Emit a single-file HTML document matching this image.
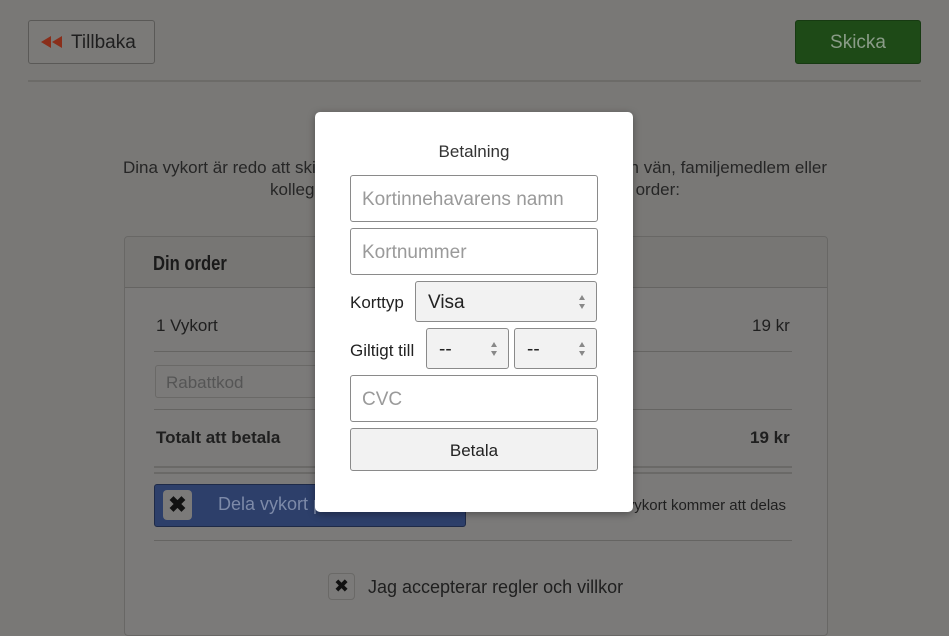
<!DOCTYPE html>
<html><head><meta charset="utf-8"><style>
*{box-sizing:border-box;margin:0;padding:0}
body{width:949px;height:626px;overflow:hidden;background:#797876;font-family:"Liberation Sans",sans-serif;position:relative;color:#1f1f1f}
.a{position:absolute}
.btn{border:1px solid #5a5957;border-radius:3px}
.inp{position:absolute;left:35px;width:248px;border:1px solid #8a8a8a;border-radius:3px;background:#fff;color:#9a9a9a;font-size:19px;padding-left:11px;padding-top:2px;display:flex;align-items:center}
.sel{position:absolute;border:1px solid #8a8a8a;border-radius:3px;background:#f2f2f2;font-size:19px;color:#222;display:flex;align-items:center;padding-left:12px;padding-top:2px}
.arr{position:absolute;right:10px;top:50%;margin-top:-7px;width:7px;height:14px}
.arr:before{content:"";position:absolute;left:0;top:0;border-left:3.5px solid transparent;border-right:3.5px solid transparent;border-bottom:5px solid #888}
.arr:after{content:"";position:absolute;left:0;bottom:0;border-left:3.5px solid transparent;border-right:3.5px solid transparent;border-top:5px solid #888}
</style></head><body>
<div class="a btn" style="left:28px;top:20px;width:127px;height:44px;background:#7b7a78;font-size:19px;line-height:44px;padding-left:42px">Tillbaka</div>
<svg class="a" style="left:41px;top:36px" width="24" height="14"><path d="M0 6L10 0V12Z M11 6L21 0V12Z" fill="#8a2e1a"/></svg>
<div class="a btn" style="left:795px;top:20px;width:126px;height:44px;background:#1e4a17;border-color:#173a12;color:#8a9c88;font-size:19px;line-height:44px;text-align:center">Skicka</div>
<div class="a" style="left:28px;top:80px;width:893px;height:2px;background:#6c6b68"></div>
<div class="a" style="left:123px;top:158px;font-size:17px;color:#262626;white-space:nowrap">Dina vykort är redo att skickas! Dela dem</div>
<div class="a" style="right:122px;top:158px;font-size:17px;color:#262626;white-space:nowrap">en vän, familjemedlem eller</div>
<div class="a" style="left:270px;top:180px;font-size:17px;color:#262626;white-space:nowrap">kollega genom att</div>
<div class="a" style="right:269px;top:180px;font-size:17px;color:#262626;white-space:nowrap">din order:</div>
<div class="a" style="left:124px;top:236px;width:704px;height:400px;border:1px solid #686765;border-radius:4px;background:#7b7a79"></div>
<div class="a" style="left:125px;top:237px;width:702px;height:51px;background:#777674;border-bottom:1px solid #656462;border-radius:4px 4px 0 0"></div>
<div class="a" style="left:153px;top:253px;font-size:20px;font-weight:bold;color:#1a1a1a;transform:scaleX(.83);transform-origin:0 0">Din order</div>
<div class="a" style="left:156px;top:316px;font-size:17px">1 Vykort</div>
<div class="a" style="left:752px;top:316px;font-size:17px">19 kr</div>
<div class="a" style="left:154px;top:351px;width:638px;height:1px;background:#656462"></div>
<div class="a" style="left:155px;top:365px;width:190px;height:33px;border:1px solid #6a6967;border-radius:3px;font-size:17px;color:#555;line-height:33px;padding-left:10px">Rabattkod</div>
<div class="a" style="left:154px;top:409px;width:638px;height:1px;background:#656462"></div>
<div class="a" style="left:156px;top:428px;font-size:17px;font-weight:bold">Totalt att betala</div>
<div class="a" style="left:750px;top:428px;font-size:17px;font-weight:bold">19 kr</div>
<div class="a" style="left:154px;top:466px;width:638px;height:2px;background:#6a6967"></div>
<div class="a" style="left:154px;top:472px;width:638px;height:2px;background:#6a6967"></div>
<div class="a" style="left:154px;top:484px;width:312px;height:43px;background:#2d3f6a;border:1px solid #1e2a48;border-radius:3px"></div>
<div class="a" style="left:163px;top:490px;width:29px;height:30px;background:#7b7a79;border-radius:4px;font-size:22px;line-height:30px;text-align:center;color:#111;font-weight:bold">✖</div>
<div class="a" style="left:218px;top:494px;font-size:18px;color:#7d8aa8">Dela vykort på Facebook</div>
<div class="a" style="right:163px;top:497px;font-size:15px;color:#1f1f1f;white-space:nowrap">Alla vykort kommer att delas</div>
<div class="a" style="left:154px;top:540px;width:638px;height:1px;background:#656462"></div>
<div class="a" style="left:328px;top:573px;width:27px;height:27px;border:1px solid #6a6967;border-radius:4px;font-size:18px;line-height:25px;text-align:center;color:#111">✖</div>
<div class="a" style="left:368px;top:577px;font-size:18px">Jag accepterar regler och villkor</div>

<div class="a" style="left:315px;top:112px;width:318px;height:400px;background:#fff;border-radius:5px;box-shadow:0 2px 8px rgba(0,0,0,.35)">
<div class="a" style="left:0;top:30px;width:318px;text-align:center;font-size:17px;color:#333">Betalning</div>
<div class="inp" style="top:63px;height:47px">Kortinnehavarens namn</div>
<div class="inp" style="top:116px;height:47px">Kortnummer</div>
<div class="a" style="left:35px;top:181px;font-size:17px;color:#222">Korttyp</div>
<div class="sel" style="left:100px;top:169px;width:182px;height:41px">Visa<span class="arr"></span></div>
<div class="a" style="left:35px;top:229px;font-size:17px;color:#222">Giltigt till</div>
<div class="sel" style="left:111px;top:216px;width:83px;height:41px">--<span class="arr"></span></div>
<div class="sel" style="left:199px;top:216px;width:83px;height:41px">--<span class="arr"></span></div>
<div class="inp" style="top:263px;height:47px">CVC</div>
<div class="a" style="left:35px;top:316px;width:248px;height:43px;border:1px solid #8a8a8a;border-radius:3px;background:#f2f2f2;text-align:center;line-height:43px;font-size:17px;color:#222">Betala</div>
</div>
</body></html>
